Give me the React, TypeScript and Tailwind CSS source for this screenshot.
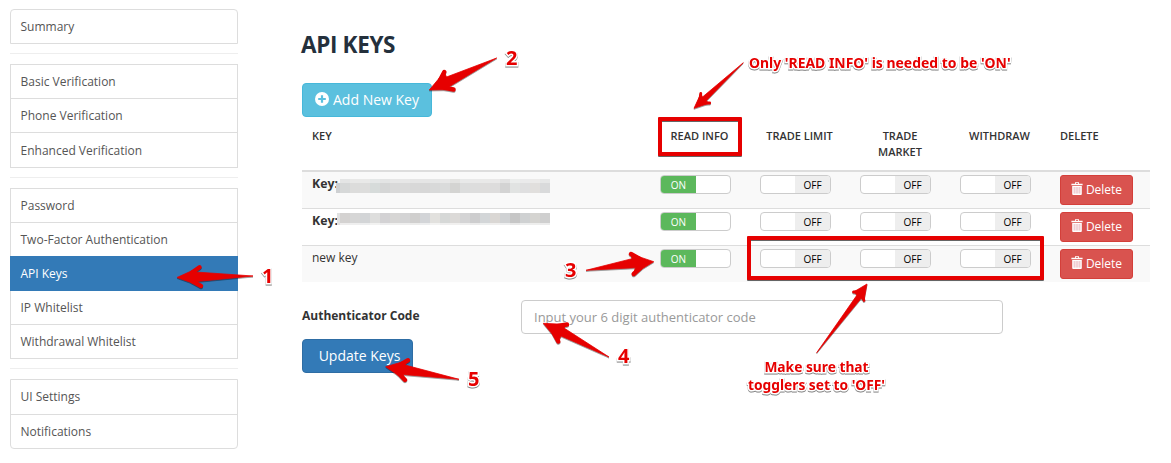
import React from "react";

const groups: string[][] = [
  ["Summary"],
  ["Basic Verification", "Phone Verification", "Enhanced Verification"],
  ["Password", "Two-Factor Authentication", "API Keys", "IP Whitelist", "Withdrawal Whitelist"],
  ["UI Settings", "Notifications"],
];

function Sidebar() {
  return (
    <nav className="w-[228px] shrink-0 text-[12px] leading-[18px] text-[#555]">
      {groups.map((items, g) => (
        <React.Fragment key={g}>
          {g > 0 && <hr className="mt-[9px] mb-[10px] border-t border-[#eee]" />}
          <ul
            className={
              "border border-[#ddd] " +
              (g === 0 ? "rounded-t-[4px]" : g === groups.length - 1 ? "rounded-b-[4px]" : "")
            }
          >
            {items.map((label, i) => {
              const active = label === "API Keys";
              const tall = label === "Enhanced Verification" || label === "UI Settings";
              return (
                <li
                  key={label}
                  className={
                    "flex items-center " +
                    (active
                      ? "relative z-10 -mx-px h-[35px] bg-[#337ab7] px-[10.5px] text-white "
                      : label === "IP Whitelist"
                        ? "h-[33px] px-[9.5px] "
                        : label === "Two-Factor Authentication"
                          ? "h-[34px] border-t border-[#ddd] px-[9.5px] "
                          : (i > 0 ? "border-t border-[#ddd] px-[9.5px] " : "px-[9.5px] ") +
                            (i === 0 ? (tall ? "h-[34px] " : "h-[33px] ") : tall ? "h-[35px] pt-px " : "h-[34px] "))
                  }
                >
                  <a className="block">{label}</a>
                </li>
              );
            })}
          </ul>
        </React.Fragment>
      ))}
    </nav>
  );
}

function Toggle({ on }: { on?: boolean }) {
  return (
    <div className="flex h-[19px] w-[71px] overflow-hidden rounded-[4px] border border-[#ccc] bg-white text-[10px] leading-[19px]">
      {on ? (
        <span className="w-[35px] bg-[#5cb85c] text-center text-white">ON</span>
      ) : (
        <span className="ml-[34px] flex-1 bg-[#eee] text-center text-black">OFF</span>
      )}
    </div>
  );
}

function TrashIcon() {
  return (
    <svg width="12" height="13" viewBox="0 0 12 13" className="mr-[3px] -mt-[3px]">
      <path d="M4 0.2h4v1.6h3.6v1.4H0.4V1.8H4z" fill="#fff" />
      <path d="M4.9 1h2.2v0.8H4.9z" fill="#d9534f" />
      <path d="M1.2 4h9.6v8a1 1 0 0 1-1 1H2.2a1 1 0 0 1-1-1z" fill="#fff" />
      <path d="M3.2 5v6.6M5.1 5v6.6M6.9 5v6.6M8.8 5v6.6" stroke="#e3a5ad" strokeWidth="0.8" />
    </svg>
  );
}

function PlusIcon() {
  return (
    <svg width="14" height="14" viewBox="0 0 14 14" className="mr-[4px]">
      <circle cx="7" cy="7" r="7" fill="#fff" />
      <path d="M7 3.2v7.6M3.2 7h7.6" stroke="#5bc0de" strokeWidth="2.2" />
    </svg>
  );
}

const stripA = ["#d6d8d8", "#dcdcdb", "#dddddc", "#d6dbda", "#d5d6d6", "#d9d9d9", "#dadada", "#d8d8d8", "#d7d7d7", "#d8d9d9", "#dadbdb", "#d4d4d2", "#dcdddd", "#dddddd", "#dedddc", "#dddcdc", "#d3d3d3", "#e1e3e2", "#dfdfe0", "#e1dfdd", "#d9dadb"];
const stripB = ["#d4d2d1", "#d6d6d6", "#d3d5d7", "#dededd", "#d3d2d4", "#d7d6d5", "#d4d4d5", "#d0cfce", "#d3d5d8", "#e2e1de", "#d6d8d7", "#dcdad8", "#d4d4d5", "#cdcdce", "#d3d6d8", "#dad7d4", "#d0d2d4", "#c6c6c6", "#cfd1d2", "#d5d4d1", "#cfcfcf"];

function Redacted({ first }: { first: boolean }) {
  const cells = first ? stripA : stripB;
  return (
    <div className={first ? "mt-[7px] flex h-[14px]" : "mt-[4px] ml-px flex h-[12px]"}>
      <span className={first ? "mt-[4px] h-[10px] w-[4px] bg-[#ced0d2]" : "w-[3px] bg-[#e0e1e1]"} />
      {cells.map((c, i) => (
        <span key={i} className="flex w-[10px] flex-col" style={{ backgroundColor: c }}>
          {first ? (
            <span className="h-[4px] bg-white/35" />
          ) : (
            <span className="mt-[10px] h-[2px] bg-white/60" />
          )}
        </span>
      ))}
    </div>
  );
}

const columns = "grid grid-cols-[348px_100px_100px_100px_100px_100px]";

function KeysTable() {
  return (
    <div className="w-[848px]">
      <div className={columns + " h-[53px] pt-[11px] text-center text-[11px] font-semibold leading-[16px] text-[#333]"}>
        <span className="pl-[10px] text-left">KEY</span>
        <span className="-ml-px">READ INFO</span>
        <span className="-ml-px">TRADE LIMIT</span>
        <span className="px-[20px]">TRADE MARKET</span>
        <span className="-ml-px">WITHDRAW</span>
        <span className="pl-[10px] text-left">DELETE</span>
      </div>
      {[0, 1, 2].map((r) => (
        <div
          key={r}
          className={
            columns +
            " items-start border-[#ddd] " +
            (r === 0 ? "h-[38px] border-t-2 bg-[#f9f9f9]" : r === 1 ? "h-[37px] border-t" : "h-[37px] border-t bg-[#f9f9f9]")
          }
        >
          <div className="flex pl-[10px] text-[12px] leading-[18px] text-[#333]">
            {r < 2 ? (
              <>
                <b className="mt-[3px] w-[24px] text-[12.3px]">Key:</b>
                <Redacted first={r === 0} />
              </>
            ) : (
              <span className="mt-[3px]">new key</span>
            )}
          </div>
          <div className="pt-[3px] pl-[10px]"><Toggle on /></div>
          <div className="pt-[3px] pl-[10px]"><Toggle /></div>
          <div className="pt-[3px] pl-[10px]"><Toggle /></div>
          <div className="pt-[3px] pl-[10px]"><Toggle /></div>
          <div className="pt-[3px] pl-[10px]">
            <button className="flex h-[30px] w-[73px] items-center justify-center rounded-[3px] border border-[#d43f3a] bg-[#d9534f] text-[12px] text-white">
              <TrashIcon />
              Delete
            </button>
          </div>
        </div>
      ))}
    </div>
  );
}

type P = [number, number];
const arrows: P[][] = [
  [[177, 277.5], [199.5, 267.3], [195.5, 272], [253, 276], [196.5, 281.5], [201, 286]],
  [[429.3, 90], [444.3, 72], [446.5, 77], [496.7, 58], [449.3, 86.7], [453.5, 89.5]],
  [[653.7, 261.7], [631, 254], [632, 258.7], [586, 270.3], [635.3, 267.7], [633.7, 274]],
  [[543.3, 323.3], [567, 324.5], [564, 328], [609, 357], [561, 336], [558.3, 341.5]],
  [[385.7, 366.7], [408, 360.3], [405, 365], [459, 379.3], [403, 374.5], [405, 380]],
  [[694, 108.3], [700.8, 93.5], [702.5, 97], [743.3, 62.7], [706, 101], [709.7, 103]],
  [[867, 284], [853.5, 292], [857, 295], [816.7, 352.7], [861, 298.5], [864, 300.5]],
];

function Arrows() {
  return (
    <svg width="1171" height="463" className="pointer-events-none absolute top-0 left-0 z-20 drop-shadow-[0_1px_0.5px_rgba(0,0,0,0.4)]">
      {arrows.map((pts, i) => {
        const r = i > 4 ? 1.4 : 2.2;
        return (
          <g key={i} fill="#e60000">
            <polygon points={pts.map((p) => p.join(",")).join(" ")} stroke="#e60000" strokeWidth="0.8" strokeLinejoin="round" />
            {[pts[1], pts[5]].map((w, k) => (
              <path
                key={k}
                d={`M${pts[0][0] + (w[0] - pts[0][0]) * 0.45 + (pts[3][0] - pts[0][0]) * 0.06} ${pts[0][1] + (w[1] - pts[0][1]) * 0.45 + (pts[3][1] - pts[0][1]) * 0.06}L${w[0]} ${w[1]}`}
                stroke="#e60000"
                strokeWidth={r * 2}
                strokeLinecap="round"
              />
            ))}
          </g>
        );
      })}
    </svg>
  );
}

const halo =
  "absolute z-30 whitespace-nowrap font-bold text-[#e60000] [font-family:'Noto_Sans','Open_Sans',sans-serif] [paint-order:stroke_fill] [-webkit-text-stroke:3px_white] drop-shadow-[0.5px_1px_0.5px_rgba(0,0,0,0.5)] ";

export default function App() {
  return (
    <div className="relative flex h-[463px] w-[1171px] overflow-hidden bg-white pt-[9px] pl-[10px] [font-family:'Open_Sans','Noto_Sans',sans-serif]">
      <Sidebar />
      <main className="ml-[64px] flex w-[848px] flex-col items-start">
        <h1 className="mt-[20px] -ml-px h-[54px] pt-px text-[22.5px] leading-[30px] font-bold tracking-[-0.35px] text-[#24303c]">API KEYS</h1>
        <button className="flex h-[34px] w-[130px] items-center justify-center rounded-[4px] border border-[#46b8da] bg-[#5bc0de] pb-[2px] text-[14px] text-white">
          <PlusIcon />
          Add New Key
        </button>
        <KeysTable />
        <div className="mt-[18px] flex h-[34px] w-full items-center">
          <label className="w-[219px] pb-[2px] text-[12px] font-bold text-[#333]">Authenticator Code</label>
          <input
            className="h-[34px] w-[482px] rounded-[4px] border border-[#ccc] px-[12px] text-[13px] placeholder:text-[#999]"
            placeholder="Input your 6 digit authenticator code"
          />
        </div>
        <button className="mt-[5px] h-[34px] w-[111px] rounded-[4px] border border-[#2e6da4] bg-[#337ab7] pb-[2px] pl-[4px] text-[14px] text-white">
          Update Keys
        </button>
      </main>
      <div className="absolute top-[117px] left-[658px] z-10 h-[39px] w-[84px] rounded-[1px] border-4 border-[#e60000] drop-shadow-[0_1px_0.5px_rgba(0,0,0,0.6)]" />
      <div className="absolute top-[236px] left-[747px] z-10 h-[44px] w-[297px] rounded-[1px] border-4 border-[#e60000] drop-shadow-[0_1px_0.5px_rgba(0,0,0,0.6)]" />
      <Arrows />
      <span className={halo + "top-[262px] left-[262px] text-[20px] leading-[28px]"}>1</span>
      <span className={halo + "top-[44px] left-[506px] text-[20px] leading-[28px]"}>2</span>
      <span className={halo + "top-[256px] left-[565px] text-[20px] leading-[28px]"}>3</span>
      <span className={halo + "top-[342px] left-[618px] text-[20px] leading-[28px]"}>4</span>
      <span className={halo + "top-[365px] left-[468px] text-[20px] leading-[28px]"}>5</span>
      <span className={halo + "top-[54px] left-[749px] text-[13.95px] leading-[18px]"}>Only 'READ INFO' is needed to be 'ON'</span>
      <span className={halo + "top-[358px] left-[748px] text-center text-[13.75px] leading-[18px]"}>
        Make sure that
        <br />
        togglers set to 'OFF'
      </span>
    </div>
  );
}
